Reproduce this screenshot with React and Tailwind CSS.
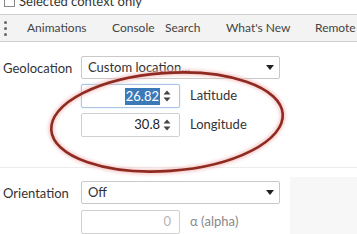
import React from 'react';

const font = { fontFamily: 'Lato, "Segoe UI", "Noto Sans", sans-serif' };

function Spinner() {
  return (
    <svg width="8" height="12" viewBox="0 0 8 12" className="ml-[3px]">
      <path d="M4 0.5 L7.5 4.5 L0.5 4.5 Z" fill="#444" />
      <path d="M4 11.5 L7.5 7.5 L0.5 7.5 Z" fill="#444" />
    </svg>
  );
}

function Caret() {
  return (
    <svg width="8" height="5" viewBox="0 0 8 5">
      <path d="M0 0 L8 0 L4 5 Z" fill="#222" />
    </svg>
  );
}

function Select({ value }) {
  return (
    <div className="flex h-[23px] w-[199px] items-center justify-between rounded-[2px] border border-[#c9c9c9] bg-white pl-[6px] pr-[5px] text-[13px] text-[#333]">
      <span className="whitespace-nowrap">{value}</span>
      <Caret />
    </div>
  );
}

function NumberInput({ value, focused, disabled, label }) {
  return (
    <div className="flex items-center">
      <div
        className={
          'flex h-[24px] w-[99px] items-center justify-end rounded-[2px] border bg-white pr-[8px] text-[13px] ' +
          (focused ? 'border-[#a9c7e4] shadow-[0_0_2px_#c6dcf1]' : 'border-[#d0d0d0]') +
          (disabled ? ' text-[#b5b5b5]' : ' text-[#222]')
        }
      >
        {focused ? (
          <span className="bg-[#3a7ab8] px-[1px] leading-[17px] text-white">{value}</span>
        ) : (
          <span>{value}</span>
        )}
        {!disabled && <Spinner />}
      </div>
      <span className={'ml-[10px] whitespace-nowrap text-[13px] ' + (disabled ? 'text-[#888]' : 'text-[#333]')}>{label}</span>
    </div>
  );
}

export default function App() {
  return (
    <div className="relative h-[234px] w-[357px] overflow-hidden bg-white" style={font}>
      {/* clipped header row */}
      <div className="h-[14px] overflow-hidden">
        <div className="-mt-[8px] flex items-center pl-[4px] text-[13px] text-[#333]">
          <span className="mr-[4px] h-[11px] w-[11px] border border-[#888]" />
          <span className="whitespace-nowrap">Selected context only</span>
        </div>
      </div>

      {/* tab strip */}
      <div className="flex h-[28px] items-center whitespace-nowrap border-y border-[#cfcfcf] bg-[#f3f3f3] text-[12px] text-[#444]">
        <div className="ml-[4px] flex w-[23px] flex-col gap-[3px]">
          <span className="h-[3px] w-[3px] rounded-full bg-[#666]" />
          <span className="h-[3px] w-[3px] rounded-full bg-[#666]" />
          <span className="h-[3px] w-[3px] rounded-full bg-[#666]" />
        </div>
        <span className="w-[85px]">Animations</span>
        <span className="w-[53px]">Console</span>
        <span className="w-[61px]">Search</span>
        <span className="w-[89px]">What's New</span>
        <span>Remote</span>
      </div>

      {/* geolocation */}
      <div className="mt-[14px] flex">
        <div className="w-[81px] pl-[3px] pt-[3px] text-[13px] text-[#333]">Geolocation</div>
        <div className="flex flex-col gap-[5px]">
          <Select value="Custom location..." />
          <NumberInput value="26.82" focused label="Latitude" />
          <NumberInput value="30.8" label="Longitude" />
        </div>
      </div>

      <div className="mt-[30px] h-px w-full bg-[#ececec]" />

      {/* orientation */}
      <div className="mt-[13px] flex">
        <div className="w-[81px] pl-[3px] pt-[3px] text-[13px] text-[#333]">Orientation</div>
        <div className="flex flex-col gap-[6px]">
          <Select value="Off" />
          <NumberInput value="0" disabled label="α (alpha)" />
        </div>
        <div className="ml-[10px] mt-[-4px] h-[80px] flex-1 bg-[#f7f7f7]" />
      </div>

      {/* hand-drawn annotation */}
      <svg className="pointer-events-none absolute left-0 top-0" width="357" height="234">
        <defs>
          <filter id="glow" x="-20%" y="-20%" width="140%" height="140%">
            <feGaussianBlur stdDeviation="1.6" />
          </filter>
        </defs>
        <ellipse cx="167" cy="122" rx="116" ry="49" transform="rotate(-4 167 122)" fill="none" stroke="#f3b8b8" strokeWidth="6" filter="url(#glow)" opacity="0.7" />
        <ellipse cx="167" cy="122" rx="116" ry="49" transform="rotate(-4 167 122)" fill="none" stroke="#8e2a20" strokeWidth="2.6" />
      </svg>
    </div>
  );
}
